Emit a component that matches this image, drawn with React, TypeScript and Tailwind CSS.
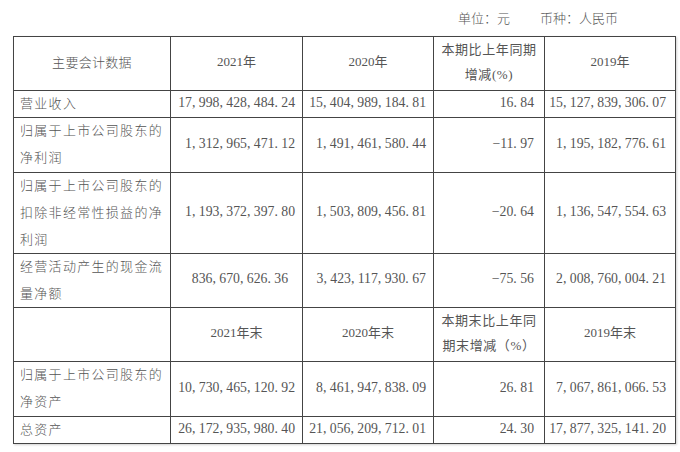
import React from "react";

const labelCls =
  "bg-white flex items-center justify-start pl-[6px] pb-[4px] text-[13px] tracking-[1.3px] leading-[27px] font-['Noto_Sans_CJK_SC',sans-serif] font-light";
const headCls =
  "bg-white flex items-center justify-center text-center pb-[4px] text-[13px] leading-[25px]";
const numCls = "bg-white flex items-center justify-end pb-[4px] text-[13.75px] leading-[27px]";

function Num({ v, pr }: { v: string; pr: string }) {
  return <div className={`${numCls} ${pr}`}>{v}</div>;
}

const f = (s: string) => s.replace(/,/g, ", ").replace(/\./g, ". ");

export default function App() {
  const rows: { label: string[]; vals: string[]; pr0?: string }[] = [
    { label: ["营业收入"], vals: ["17,998,428,484.24", "15,404,989,184.81", "16.84", "15,127,839,306.07"] },
    {
      label: ["归属于上市公司股东的", "净利润"],
      vals: ["1,312,965,471.12", "1,491,461,580.44", "-11.97", "1,195,182,776.61"],
    },
    {
      label: ["归属于上市公司股东的", "扣除非经常性损益的净", "利润"],
      vals: ["1,193,372,397.80", "1,503,809,456.81", "-20.64", "1,136,547,554.63"],
    },
    {
      label: ["经营活动产生的现金流", "量净额"],
      vals: ["836,670,626.36", "3,423,117,930.67", "-75.56", "2,008,760,004.21"],
      pr0: "pr-[14px]",
    },
  ];
  const rows2: { label: string[]; vals: string[] }[] = [
    {
      label: ["归属于上市公司股东的", "净资产"],
      vals: ["10,730,465,120.92", "8,461,947,838.09", "26.81", "7,067,861,066.53"],
    },
    { label: ["总资产"], vals: ["26,172,935,980.40", "21,056,209,712.01", "24.30", "17,877,325,141.20"] },
  ];
  const prs = ["pr-[7px]", "pr-[7px]", "pr-[10px]", "pr-[9px]"];

  const renderRow = (r: { label: string[]; vals: string[]; pr0?: string }, i: number) => (
    <React.Fragment key={i}>
      <div className={labelCls}>
        <div>
          {r.label.map((l, j) => (
            <div key={j}>{l}</div>
          ))}
        </div>
      </div>
      {r.vals.map((v, j) => (
        <Num key={j} v={j === 2 ? v.replace("-", "−").replace(".", ". ") : f(v)} pr={j === 0 && r.pr0 ? r.pr0 : prs[j]} />
      ))}
    </React.Fragment>
  );

  return (
    <div className="w-[680px] h-[452px] bg-white text-[#555] font-['Liberation_Serif','Noto_Sans_CJK_SC',serif] overflow-hidden">
      <div className="h-[36px] flex items-center justify-end pr-[62px] gap-[30px] text-[13px] font-['Noto_Sans_CJK_SC',sans-serif] font-light">
        <span>单位：元</span>
        <span>币种：人民币</span>
      </div>
      <div className="ml-[13px] w-fit grid grid-cols-[156px_131px_130px_110px_130px] grid-rows-[53px_26px_54px_80px_53px_53px_54px_26px] gap-px bg-[#444] border border-[#444] shadow-[1px_1px_2px_rgba(0,0,0,0.18)]">
        <div className={`${headCls} font-['Noto_Sans_CJK_SC',sans-serif] font-light tracking-[0.3px]`}>主要会计数据</div>
        <div className={headCls}>2021年</div>
        <div className={headCls}>2020年</div>
        <div className={`${headCls} tracking-[0.6px]`}>
          <div>
            <div>本期比上年同期</div>
            <div>增减(%)</div>
          </div>
        </div>
        <div className={headCls}>2019年</div>
        {rows.map(renderRow)}
        <div className={headCls}></div>
        <div className={headCls}>2021年末</div>
        <div className={headCls}>2020年末</div>
        <div className={`${headCls} tracking-[0.6px]`}>
          <div>
            <div>本期末比上年同</div>
            <div>期末增减（%）</div>
          </div>
        </div>
        <div className={headCls}>2019年末</div>
        {rows2.map((r, i) => renderRow(r, i + 10))}
      </div>
    </div>
  );
}
